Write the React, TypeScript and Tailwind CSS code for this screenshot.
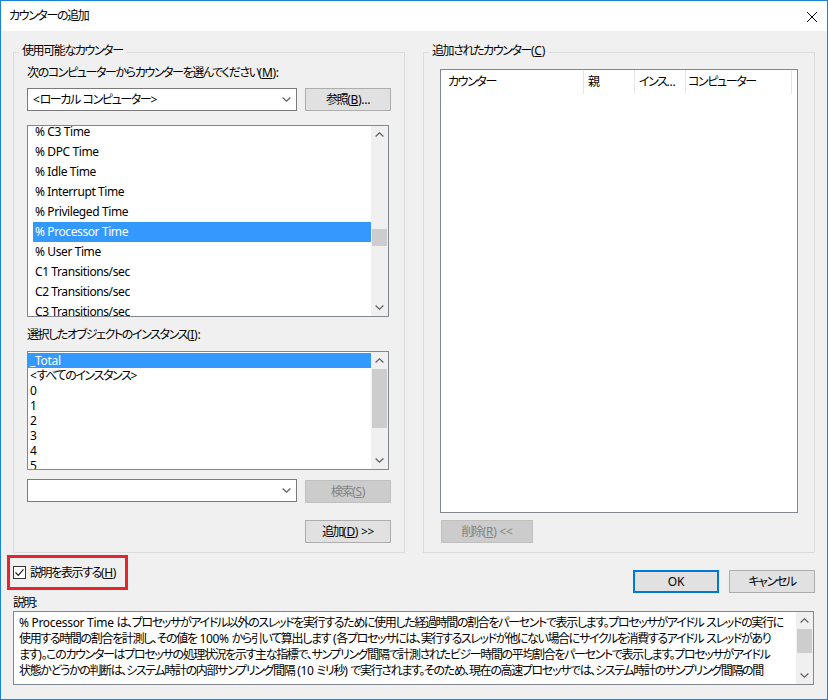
import React from "react";

const A = "tracking-[-0.3px]";

function T({ s }: { s: string }) {
  const parts = s.split(/([\x20-\x7e]+)/);
  return (
    <>
      {parts.map((p, i) =>
        p === "" ? null : /^[\x20-\x7e]+$/.test(p) ? (
          <span key={i} className={A}>
            {p}
          </span>
        ) : (
          <span key={i}>{p}</span>
        )
      )}
    </>
  );
}

function Chev({ up, color = "#606060" }: { up?: boolean; color?: string }) {
  return (
    <svg width="9" height="5" viewBox="0 0 9 5" className="block">
      <path
        d={up ? "M0.6 4.5 L4.5 0.8 L8.4 4.5" : "M0.6 0.5 L4.5 4.2 L8.4 0.5"}
        fill="none"
        stroke={color}
        strokeWidth="1.2"
      />
    </svg>
  );
}

function VScroll({ thumb }: { thumb: string }) {
  return (
    <div className="flex w-[17px] shrink-0 flex-col bg-[#f0f0f0]">
      <div className="flex h-[17px] shrink-0 items-center justify-center">
        <Chev up />
      </div>
      <div className="flex-1 px-px">
        <div className={"bg-[#cdcdcd] " + thumb} />
      </div>
      <div className="flex h-[17px] shrink-0 items-center justify-center">
        <Chev />
      </div>
    </div>
  );
}

function Btn({
  children,
  disabled,
  className = "",
}: {
  children: React.ReactNode;
  disabled?: boolean;
  className?: string;
}) {
  return (
    <div
      className={
        "flex h-[23px] w-[86px] shrink-0 items-center justify-center border leading-[16px] whitespace-nowrap " +
        (disabled
          ? "border-[#bfbfbf] bg-[#cccccc] text-[#838383] "
          : "border-[#adadad] bg-[#e1e1e1] text-black ") +
        className
      }
    >
      {children}
    </div>
  );
}

function Combo({ text }: { text?: string }) {
  return (
    <div className="flex h-[23px] w-[270px] shrink-0 items-center justify-between border border-[#7a7a7a] bg-white pl-[5px] pr-[5px] leading-[16px]">
      <span className="whitespace-nowrap">{text ? <T s={text} /> : null}</span>
      <Chev />
    </div>
  );
}

const counters = [
  "% C3 Time",
  "% DPC Time",
  "% Idle Time",
  "% Interrupt Time",
  "% Privileged Time",
  "% Processor Time",
  "% User Time",
  "C1 Transitions/sec",
  "C2 Transitions/sec",
  "C3 Transitions/sec",
];

const instances = ["_Total", "<すべてのインスタンス>", "0", "1", "2", "3", "4", "5"];

const L = "tracking-[-0.4px]";

function Mn({ k, after = "" }: { k: string; after?: string }) {
  return (
    <span className={A}>
      (<u>{k}</u>){after}
    </span>
  );
}

export default function App() {
  return (
    <div className="flex h-[700px] w-[828px] flex-col border border-[#1883d7] bg-white font-['Noto_Sans','Noto_Sans_CJK_JP',sans-serif] text-[12px] tracking-[-1.4px] text-black [font-feature-settings:'palt']">
      {/* title bar */}
      <div className="flex h-[30px] shrink-0 items-center justify-between bg-white pl-[8px] pr-[8px]">
        <span className="leading-[16px]">カウンターの追加</span>
        <svg width="12" height="12" viewBox="0 0 12 12" className="mr-[1px] mt-[2px]">
          <path d="M1 1 L11 11 M11 1 L1 11" stroke="#000" strokeWidth="1" />
        </svg>
      </div>

      {/* body */}
      <div className="flex flex-1 flex-col bg-[#f0f0f0] px-[12px] pt-[21px]">
        <div className="flex gap-[18px]">
          {/* left group */}
          <div className="relative h-[501px] w-[392px] border border-[#dcdcdc] pl-[13px] pt-[12px]">
            <span className="absolute -top-[10px] left-[5px] bg-[#f0f0f0] px-[3px] leading-[16px]">
              使用可能なカウンター
            </span>
            <div className="leading-[16px]">
              次のコンピューターからカウンターを選んでください
              <Mn k="M" after=":" />
            </div>
            <div className="mt-[7px] flex gap-[8px]">
              <Combo text="<ローカル コンピューター>" />
              <Btn>
                参照
                <Mn k="B" after="..." />
              </Btn>
            </div>
            <div className="mt-[14px] flex h-[192px] w-[362px] border border-[#828790] bg-white">
              <div className="flex-1 overflow-hidden">
                <div className="-mt-[4px]">
                  {counters.map((c, i) => (
                    <div
                      key={c}
                      className={
                        "ml-[5px] h-[20px] pl-[2px] leading-[20px] " +
                        L +
                        " " +
                        (i === 5 ? "bg-[#3399ff] text-white" : "")
                      }
                    >
                      {c}
                    </div>
                  ))}
                </div>
              </div>
              <VScroll thumb="mt-[86px] h-[17px]" />
            </div>
            <div className="mt-[10px] leading-[16px]">
              選択したオブジェクトのインスタンス
              <Mn k="I" after=":" />
            </div>
            <div className="mt-[8px] flex h-[119px] w-[362px] border border-[#828790] bg-white">
              <div className="flex-1 overflow-hidden pt-px">
                {instances.map((c, i) => (
                  <div
                    key={c}
                    className={
                      "h-[15px] pl-[2px] leading-[15px] " +
                      (i === 0 ? "bg-[#3399ff] text-white" : "")
                    }
                  >
                    <T s={c} />
                  </div>
                ))}
              </div>
              <VScroll thumb="mt-0 h-[59px]" />
            </div>
            <div className="mt-[9px] flex h-[24px] gap-[8px]">
              <Combo />
              <Btn disabled className="mt-px">
                検索
                <Mn k="S" />
              </Btn>
            </div>
            <div className="mt-[17px] flex pl-[278px]">
              <Btn>
                追加
                <Mn k="D" after=" >>" />
              </Btn>
            </div>
          </div>

          {/* right group */}
          <div className="relative h-[501px] w-[392px] border border-[#dcdcdc] pl-[16px] pt-[16px]">
            <span className="absolute -top-[10px] left-[5px] bg-[#f0f0f0] px-[3px] leading-[16px]">
              追加されたカウンター
              <Mn k="C" />
            </span>
            <div className="h-[444px] w-[358px] border border-[#828790] bg-white">
              <div className="flex h-[24px] leading-[24px] whitespace-nowrap">
                <div className="w-[143px] border-r border-[#e5e5e5] pl-[7px]">カウンター</div>
                <div className="w-[51px] border-r border-[#e5e5e5] pl-[4px]">親</div>
                <div className="w-[51px] border-r border-[#e5e5e5] pl-[4px]">
                  <T s="インス..." />
                </div>
                <div className="w-[106px] border-r border-[#e5e5e5] pl-[2px]">コンピューター</div>
              </div>
            </div>
            <div className="mt-[7px] ml-px">
              <Btn disabled className="w-[92px]">
                削除
                <Mn k="R" after=" <<" />
              </Btn>
            </div>
          </div>
        </div>

        {/* checkbox + ok/cancel */}
        <div className="mt-[2px] flex items-start justify-between">
          <div className="-ml-[6px] flex h-[35px] w-[121px] items-center gap-[4px] border-[3px] border-[#e3262d] pl-[3px]">
            <div className="flex h-[13px] w-[13px] shrink-0 items-center justify-center border border-[#333] bg-white">
              <svg width="11" height="11" viewBox="0 0 11 11">
                <path d="M1.5 5.5 L4.3 8.3 L9.5 2.3" fill="none" stroke="#222" strokeWidth="1.2" />
              </svg>
            </div>
            <span className="whitespace-nowrap leading-[16px]">
              説明を表示する
              <Mn k="H" />
            </span>
          </div>
          <div className="mt-[15px] flex gap-[10px]">
            <div className="flex h-[23px] w-[86px] items-center justify-center border-2 border-[#0078d7] bg-[#e1e1e1] leading-[16px] tracking-[-0.2px]">
              OK
            </div>
            <Btn>キャンセル</Btn>
          </div>
        </div>

        <div className="mt-[2px] leading-[16px]">
          説明<span className={A}>:</span>
        </div>
        <div className="flex h-[74px] w-[801px] border border-[#828790] bg-white">
          <div className="flex-1 overflow-hidden pl-[5px] pt-[3px] tracking-[-1.35px]">
            <div className="whitespace-nowrap leading-[16px]">
              <T s="% Processor Time は、プロセッサがアイドル以外のスレッドを実行するために使用した経過時間の割合をパーセントで表示します。プロセッサがアイドル スレッドの実行に" />
            </div>
            <div className="whitespace-nowrap leading-[16px]">
              <T s="使用する時間の割合を計測し、その値を 100% から引いて算出します (各プロセッサには、実行するスレッドが他にない場合にサイクルを消費するアイドル スレッドがあり" />
            </div>
            <div className="whitespace-nowrap leading-[16px]">
              <T s="ます)。このカウンターはプロセッサの処理状況を示す主な指標で、サンプリング間隔で計測されたビジー時間の平均割合をパーセントで表示します。プロセッサがアイドル" />
            </div>
            <div className="whitespace-nowrap leading-[16px]">
              <T s="状態かどうかの判断は、システム時計の内部サンプリング間隔 (10 ミリ秒) で実行されます。そのため、現在の高速プロセッサでは、システム時計のサンプリング間隔の間" />
            </div>
          </div>
          <VScroll thumb="mt-0 h-[24px]" />
        </div>
      </div>
    </div>
  );
}
